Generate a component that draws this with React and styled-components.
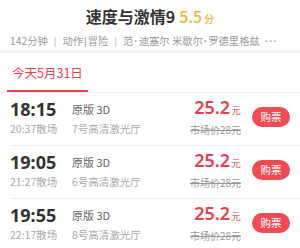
import React from "react";
import styled, { createGlobalStyle } from "styled-components";

const GlobalStyle = createGlobalStyle`
  html, body {
    margin: 0;
    padding: 0;
    background: #fff;
  }
  body {
    font-family: "Noto Sans CJK SC", "Noto Sans", sans-serif;
    color: #333;
  }
`;

const shows = [
  { start: "18:15", end: "20:37散场", lang: "原版 3D", hall: "7号高清激光厅", price: "25.2", market: "市场价28元" },
  { start: "19:05", end: "21:27散场", lang: "原版 3D", hall: "6号高清激光厅", price: "25.2", market: "市场价28元" },
  { start: "19:55", end: "22:17散场", lang: "原版 3D", hall: "8号高清激光厅", price: "25.2", market: "市场价28元" },
];

const App = () => {
  return (
    <Page>
      <GlobalStyle />
      <Header>
        <Title>
          速度与激情9
          <Score>
            5.5<small>分</small>
          </Score>
        </Title>
        <Meta>
          142分钟<Sep>|</Sep>动作<Bar>|</Bar>冒险<Sep>|</Sep>范<Dot>·</Dot>迪塞尔 米歇尔<Dot>·</Dot>罗德里格兹<More>···</More>
        </Meta>
      </Header>
      <Tabs>
        <Tab active>今天5月31日</Tab>
      </Tabs>
      <List>
        {shows.map((s, i) => (
          <Row key={i}>
            <TimeCol>
              <Start>{s.start}</Start>
              <Sub>{s.end}</Sub>
            </TimeCol>
            <InfoCol>
              <Lang>{s.lang}</Lang>
              <Sub>{s.hall}</Sub>
            </InfoCol>
            <PriceCol>
              <Price>
                {s.price}
                <small>元</small>
              </Price>
              <Market>{s.market}</Market>
            </PriceCol>
            <BuyButton>购票</BuyButton>
          </Row>
        ))}
      </List>
    </Page>
  );
};

const Page = styled.div`
  width: 300px;
  height: 248px;
  overflow: hidden;
  background: #fff;
`;

const Header = styled.div`
  padding: 6px 10px 0;
  height: 44px;
  border-bottom: 3px solid #f3f3f3;
  display: flex;
  flex-direction: column;
  align-items: center;
`;

const Title = styled.div`
  font-size: 16px;
  font-weight: 700;
  line-height: 20px;
  color: #333;
  display: flex;
  align-items: baseline;
`;

const Score = styled.span`
  margin-left: 4px;
  color: #f5b330;
  font-size: 16px;
  font-weight: 500;
  small {
    font-size: 10px;
    margin-left: 2px;
  }
`;

const Meta = styled.div`
  align-self: stretch;
  margin-top: 5px;
  font-size: 10.3px;
  line-height: 14px;
  color: #9a9a9a;
  white-space: nowrap;
  overflow: hidden;
`;

const Sep = styled.span`
  margin: 0 6px;
  color: #c4c4c4;
  font-family: "Liberation Sans", sans-serif;
`;

const Bar = styled.span`
  margin: 0 1px;
  font-family: "Liberation Sans", sans-serif;
`;

const Dot = styled.span`
  margin: 0 1px;
  font-family: "Liberation Sans", sans-serif;
  font-weight: 700;
`;

const More = styled.span`
  margin-left: 5px;
  letter-spacing: 1px;
  font-family: "Liberation Sans", sans-serif;
  font-weight: 700;
  color: #b0b0b0;
`;

const Tabs = styled.div`
  display: flex;
  padding: 0 7px;
  border-bottom: 1px solid #eee;
`;

const Tab = styled.div`
  padding: 13px 5px 10px;
  font-size: 12.5px;
  line-height: 14px;
  color: ${(p) => (p.active ? "#e5424d" : "#666")};
  border-bottom: 2px solid ${(p) => (p.active ? "#e5424d" : "transparent")};
`;

const List = styled.div`
  padding-left: 10px;
`;

const Row = styled.div`
  display: flex;
  align-items: center;
  height: 47px;
  padding: 0 10px 5px 0;
  border-bottom: 1px solid #eee;
`;

const TimeCol = styled.div`
  width: 62px;
  display: flex;
  flex-direction: column;
`;

const Start = styled.div`
  font-size: 18px;
  font-weight: 700;
  line-height: 20px;
  color: #333;
  font-family: "Noto Sans", sans-serif;
`;

const Sub = styled.div`
  margin-top: 4px;
  font-size: 10.5px;
  line-height: 12px;
  color: #aaa;
  white-space: nowrap;
`;

const InfoCol = styled.div`
  flex: 1;
  display: flex;
  flex-direction: column;
`;

const Lang = styled.div`
  font-size: 11px;
  line-height: 20px;
  color: #666;
`;

const PriceCol = styled.div`
  display: flex;
  flex-direction: column;
  align-items: flex-end;
`;

const Price = styled.div`
  font-size: 18px;
  font-weight: 600;
  line-height: 20px;
  color: #e5424d;
  font-family: "Noto Sans", sans-serif;
  small {
    font-size: 10px;
    font-weight: 400;
    margin-left: 1px;
  }
`;

const Market = styled.div`
  margin-top: 4px;
  font-size: 10px;
  line-height: 12px;
  color: #999;
  text-decoration: line-through;
`;

const BuyButton = styled.button`
  margin-left: 11px;
  width: 38px;
  height: 20px;
  border: 0;
  border-radius: 10px;
  background: #ee4b55;
  color: #fff;
  font-size: 10.5px;
  padding: 0;
  font-family: "Noto Sans CJK SC", sans-serif;
`;

export default App;
